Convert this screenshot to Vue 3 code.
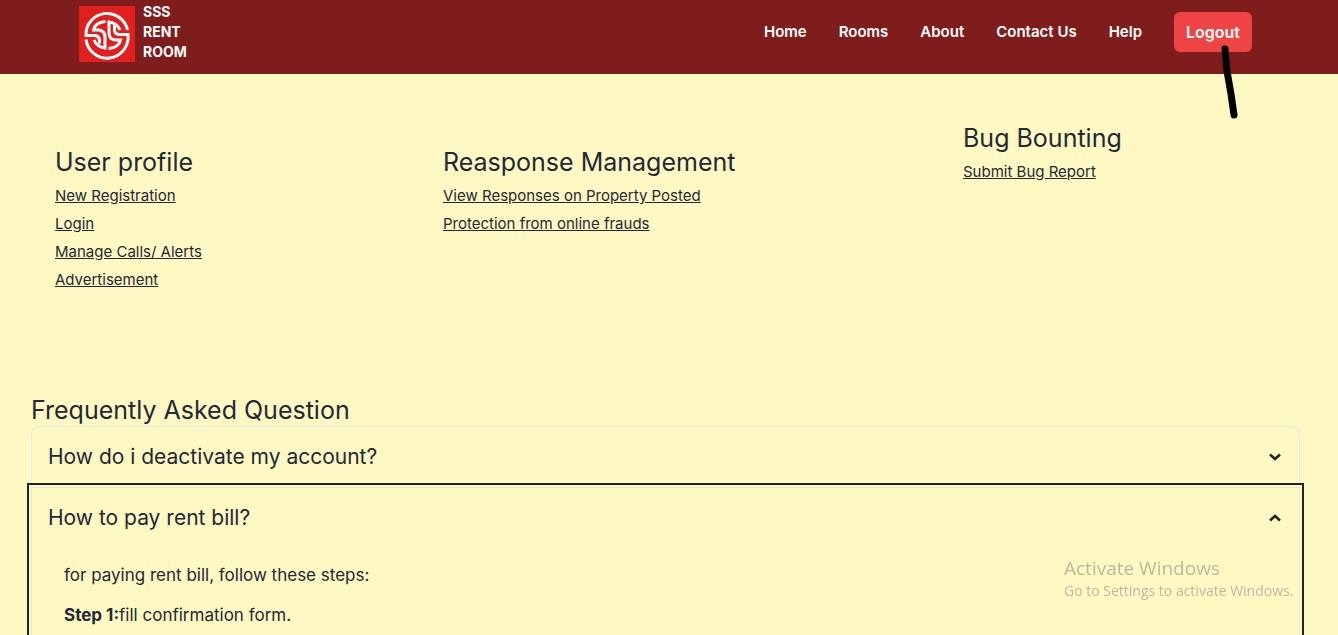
<script setup>
import { ref } from 'vue'

const nav = ['Home', 'Rooms', 'About', 'Contact Us', 'Help']
const groups = [
  { title: 'User profile', links: ['New Registration', 'Login', 'Manage Calls/ Alerts', 'Advertisement'] },
  { title: 'Reasponse Management', links: ['View Responses on Property Posted', 'Protection from online frauds'] },
  { title: 'Bug Bounting', raised: true, links: ['Submit Bug Report'] },
]
const firstOpen = ref(false)
const secondOpen = ref(true)
</script>

<template>
  <div class="page">
    <header class="bar">
      <a class="brand" href="#">
        <svg class="logo" viewBox="0 0 56 56" aria-hidden="true">
          <rect width="56" height="56" fill="#e31e1e" />
          <g fill="none" stroke="#fff" stroke-width="3">
            <path d="M48.500 24A21 21 0 0 0 7 29.500H16Q20 30 20.500 34V37.500" />
            <path d="M7 33.500A21 21 0 0 0 49 28.500H40Q35.500 28 35.500 24V19" />
            <path d="M26.500 15.500Q16 16.500 14.500 24H20Q26 25 26 31V42Q18 41 15 34" />
            <path d="M29.500 42.500Q40 41.500 41.500 34H36Q30 33 30 27V16Q38 17 41 24" />
          </g>
        </svg>
        <span class="name">SSS<br />RENT<br />ROOM</span>
      </a>
      <nav class="nav">
        <a v-for="item in nav" :key="item" href="#">{{ item }}</a>
        <span class="exit">
          <button type="button" class="logout">Logout</button>
          <svg class="mark" width="24" height="80" viewBox="0 0 24 80" aria-hidden="true">
            <path d="M5 5L7 27L11 50L14 71" fill="none" stroke="#000" stroke-width="7" stroke-linecap="round" stroke-linejoin="round" />
          </svg>
        </span>
      </nav>
    </header>

    <main>
      <section class="groups">
        <div v-for="g in groups" :key="g.title" class="group" :class="{ raised: g.raised }">
          <h2>{{ g.title }}</h2>
          <ul>
            <li v-for="l in g.links" :key="l"><a href="#">{{ l }}</a></li>
          </ul>
        </div>
      </section>

      <section class="faq">
        <h2>Frequently Asked Question</h2>
        <div class="item first">
          <button type="button" class="question" :aria-expanded="firstOpen" @click="firstOpen = !firstOpen">
            How do i deactivate my account?
            <svg class="chevron" :class="{ up: firstOpen }" viewBox="0 0 12 8" aria-hidden="true"><path d="M1 1.5L6 6L11 1.5" /></svg>
          </button>
        </div>
        <div class="item current">
          <button type="button" class="question" :aria-expanded="secondOpen" @click="secondOpen = !secondOpen">
            How to pay rent bill?
            <svg class="chevron" :class="{ up: secondOpen }" viewBox="0 0 12 8" aria-hidden="true"><path d="M1 1.5L6 6L11 1.5" /></svg>
          </button>
          <div v-if="secondOpen" class="answer">
            <p>for paying rent bill, follow these steps:</p>
            <p><strong>Step 1:</strong>fill confirmation form.</p>
          </div>
        </div>
      </section>
    </main>

    <aside class="notice">
      <div class="notice-title">Activate Windows</div>
      <div>Go to Settings to activate Windows.</div>
    </aside>
  </div>
</template>

<style>
body {
  background: #fef8c3;
}
</style>

<style scoped>
.page {
  height: 100vh;
  overflow: hidden;
  background: #fef8c3;
  color: #1f2937;
  font-family: Inter, "Open Sans", sans-serif;
  font-size: 17px;
  line-height: 24px;
}
.bar {
  display: flex;
  align-items: center;
  justify-content: space-between;
  height: 74px;
  box-sizing: border-box;
  padding: 0 86px 10px 79px;
  background: #7f1d1d;
  color: #fff;
}
.brand {
  display: flex;
  align-items: center;
  gap: 8px;
  color: inherit;
  text-decoration: none;
  padding-top: 4px;
}
.logo {
  width: 56px;
  height: 56px;
}
.name {
  margin-top: -4px;
  font-size: 14px;
  line-height: 20px;
  font-weight: 700;
}
.nav {
  display: flex;
  align-items: center;
  gap: 32px;
}
.nav a {
  color: #fff;
  text-decoration: none;
  font-size: 15px;
  font-weight: 600;
}
.exit {
  position: relative;
}
.logout {
  display: block;
  height: 40px;
  padding: 0 12px;
  border: 0;
  border-radius: 6px;
  background: #ef4444;
  color: #fff;
  font: 600 16px/24px Inter, sans-serif;
}
.mark {
  position: absolute;
  right: 8px;
  top: 32px;
  pointer-events: none;
}
.groups {
  display: grid;
  grid-template-columns: 388fr 520fr 375fr;
  height: 320px;
  box-sizing: border-box;
  padding: 72px 0 0 55px;
}
h2 {
  margin: 0;
  font-size: 25px;
  line-height: 32px;
  font-weight: 400;
}
.raised {
  margin-top: -24px;
}
ul {
  margin: 4px 0 0;
  padding: 0;
  list-style: none;
}
li {
  font-size: 15px;
  line-height: 28px;
}
li a {
  color: #1f2937;
  text-decoration: underline;
}
.faq {
  padding: 0 38px 0 31px;
}
.item {
  border: 1px solid #e5e7eb;
}
.first {
  border-bottom: 0;
  border-radius: 8px 8px 0 0;
}
.current {
  outline: 2px solid #1f2422;
  outline-offset: 2px;
}
.question {
  display: flex;
  align-items: center;
  justify-content: space-between;
  width: 100%;
  height: 60px;
  padding: 0 18px 0 16px;
  border: 0;
  background: transparent;
  color: #1f2937;
  font: 400 21px/28px Inter, sans-serif;
  text-align: left;
}
.chevron {
  width: 12px;
  height: 8px;
  fill: none;
  stroke: #1f2422;
  stroke-width: 2.5;
}
.up {
  transform: rotate(180deg);
}
.answer {
  padding: 15px 32px;
}
.answer p {
  margin: 0 0 16px;
}
.notice {
  position: fixed;
  right: 37px;
  bottom: 33px;
  width: 237px;
  color: #bdb9a0;
  font: 400 14px/22px "Open Sans", sans-serif;
  white-space: nowrap;
}
.notice-title {
  font-size: 19px;
  line-height: 24px;
}
</style>
